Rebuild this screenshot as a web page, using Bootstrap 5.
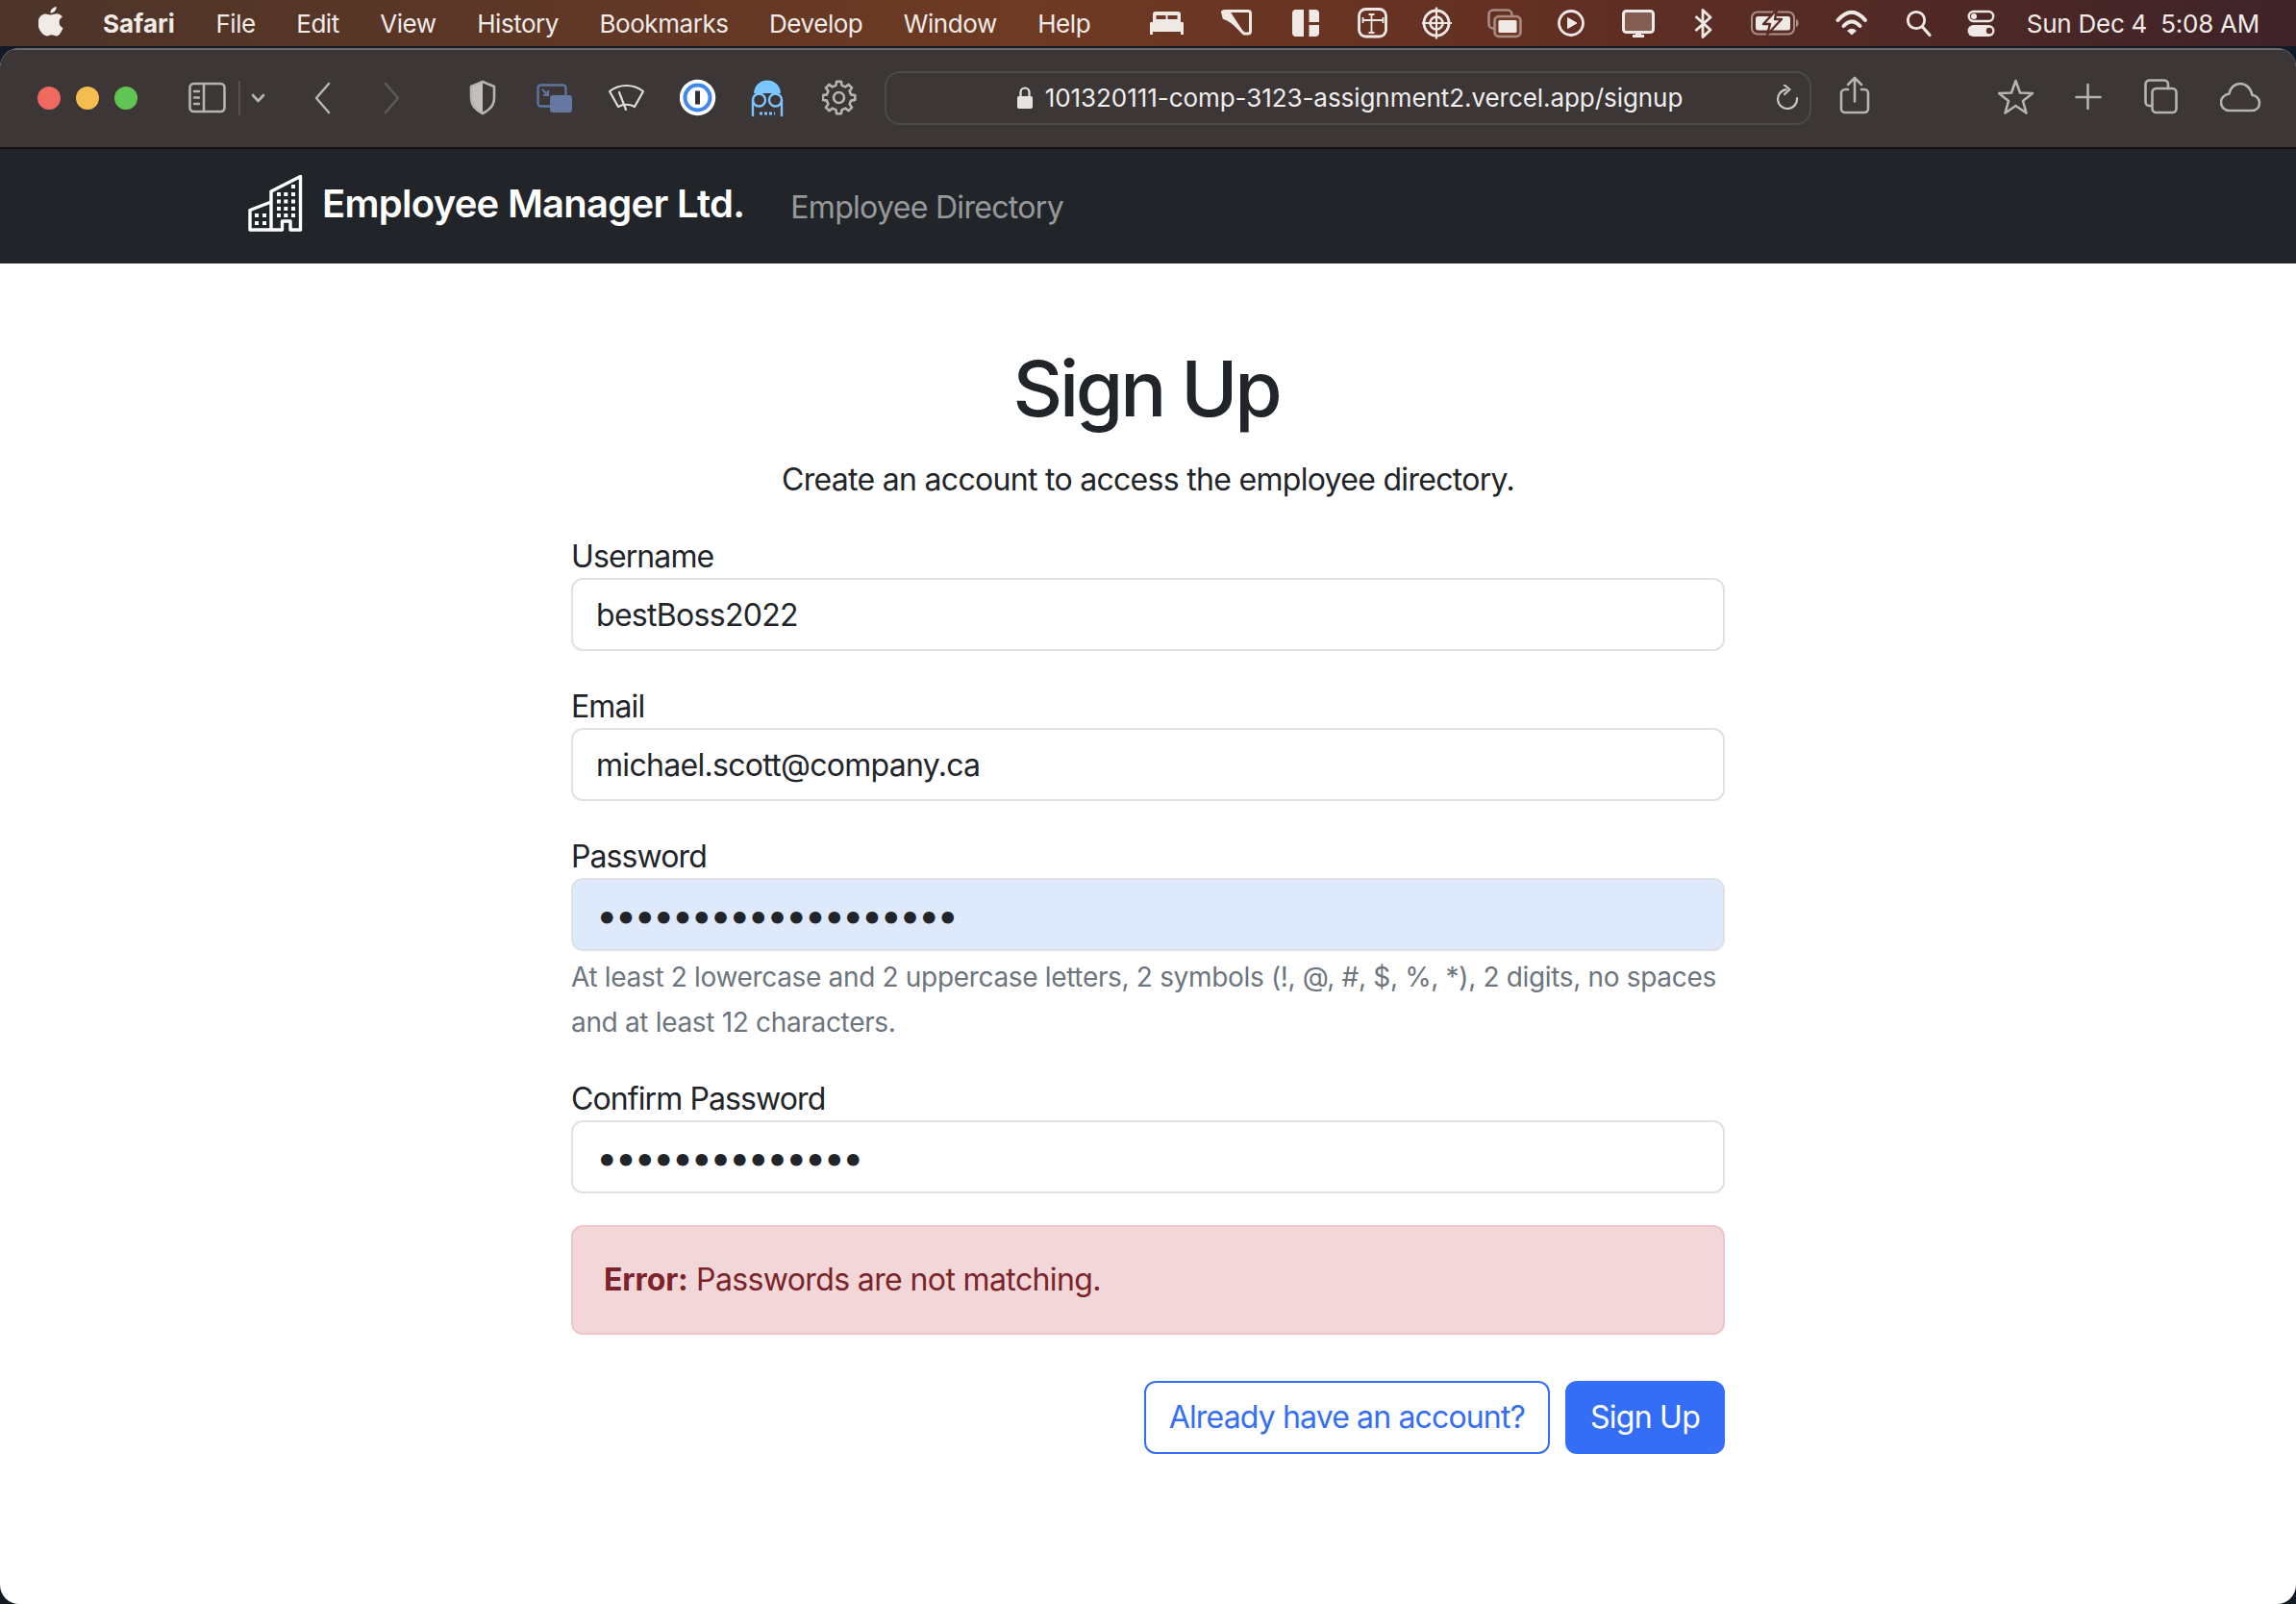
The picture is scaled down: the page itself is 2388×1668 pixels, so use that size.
<!DOCTYPE html>
<html lang="en">
<head>
<meta charset="UTF-8">
<meta name="viewport" content="width=device-width, initial-scale=1.0">
<title>Sign Up</title>
<link href="https://cdn.jsdelivr.net/npm/bootstrap@5.3.0/dist/css/bootstrap.min.css" rel="stylesheet">
<style>
    /* screenshot is a 2x retina capture, so 1rem = 32px */
    html { font-size: 32px; }
    :root { --bs-border-width: 2px; --bs-body-font-family: Inter, "Liberation Sans", sans-serif; --bs-body-color: #212529; }
    body { background: #121a28; height: 1668px; overflow: hidden; font-family: Inter, "Liberation Sans", sans-serif; }
    svg { display: block; flex: none; }

    .menubar { height: 48px; padding: 0 38px 0 40px; color: #f1ebe8; font-size: 26px; letter-spacing: -.45px; background: linear-gradient(90deg, #4c3429 0%, #6f3a23 45%, #622f23 68%, #3e2329 100%); }
    .menubar .menu-app { font-weight: 700; letter-spacing: 0; }
    .menu-items { gap: 42.500px; }
    .menu-clock { white-space: pre; letter-spacing: -.25px; }

    .app-window { height: 1618px; margin-top: 2px; border-radius: 20px; overflow: hidden; background: #fff; }
    .toolbar { height: 105px; padding: 0 0 2px 39px; background: #3c3636; border-top: 2px solid #6d6967; border-bottom: 2px solid #121212; }
    .traffic { gap: 16px; width: 157px; }
    .traffic span { width: 24px; height: 24px; border-radius: 50%; }
    .urlbar { width: 964px; height: 56px; border: 2px solid #4f4a4a; border-radius: 16px; color: #f0eeee; font-size: 26px; letter-spacing: -.06px; gap: 13px; margin-right: 29px; padding-left: 4px; }
    .reload-ico { position: absolute; right: 11px; top: 12px; }
    .tool-line { fill: none; stroke: #b7b3b2; stroke-width: 2.6; stroke-linecap: round; stroke-linejoin: round; }

    .top-nav { background: #212529; height: 119px; }
    .nav-wrap { width: 1920px; padding: 0 24px; margin: 0 auto; }
    .nav-wrap svg { margin-top: -8px; }
    .brand-name { color: #fff; font-size: 40px; font-weight: 600; letter-spacing: -.73px; margin: -6px 48px 0 20px; white-space: nowrap; }
    .nav-text { color: rgba(255,255,255,.55); font-size: 32px; letter-spacing: -.68px; margin-top: 2px; }

    .signup { width: 1200px; margin: 0 auto; padding-top: 82px; letter-spacing: -.7px; }
    .signup h1 { font-size: 80px; font-weight: 500; line-height: 96px; margin-bottom: 23px; letter-spacing: -3.200px; padding-right: 4px; }
    .signup .intro { margin-bottom: 32px; }
    .signup .form-label { display: block; margin-bottom: -2px; line-height: 48px; letter-spacing: -.9px; }
    .signup .form-control { letter-spacing: -.7px; padding-top: 13px; padding-bottom: 11px; }
    .field-gap { margin-bottom: 34px; }
    .signup .pw-dots { font-size: 40px; line-height: 48px; height: 76px; letter-spacing: -2.800px; padding-top: 12px; padding-bottom: 12px; }
    .input-filled, .input-filled:focus { background: #dee9fb; }
    .hint { font-size: 28px; line-height: 47px; color: #6c757d; margin: 4px 0 -2px; letter-spacing: -.33px; }
    .alert-err { --bs-alert-bg: #f3d6d8; --bs-alert-border-color: #eec5c8; --bs-alert-color: #7a2329; margin-top: -1px; margin-bottom: 48px; padding-top: 31px; padding-bottom: 31px; letter-spacing: -.62px; }
    .alert-err strong { letter-spacing: -.1px; }
    .signup .btn { letter-spacing: -.75px; }
    .signup .btn-outline-primary { letter-spacing: -.85px; }
    .btn-primary { --bs-btn-bg: #356ef6; --bs-btn-border-color: #356ef6; }
    .btn-outline-primary { --bs-btn-color: #356ef6; --bs-btn-border-color: #356ef6; }
</style>
</head>
<body>
    <!-- macOS menu bar -->
    <div class="menubar d-flex align-items-center">
        <svg width="67" height="36" viewBox="0 0 67 36"><path fill="#f1ebe8" d="M18 8.200c1.600 0 3.200-1 5.400-1 2.600 0 4.800 1.300 6.100 3.400-2.700 1.700-3.400 3.600-3.400 5.600 0 2.600 1.400 4.600 3.900 5.800-.8 2.500-3.600 8.400-6.700 8.400-1.800 0-2.900-1.200-5-1.200-2.200 0-3.300 1.200-5 1.200C9.300 30.400 4 23.700 4 17.300c0-6 3.700-9.800 7.900-9.800 2.400 0 4.500 1.700 6.100.7zM23.200 0c.2 3.900-3 6.800-6.300 6.600C16.600 3 20 .2 23.200 0z" transform="translate(-4.500 1)"/></svg>
        <div class="menu-items d-flex">
            <span class="menu-app">Safari</span><span>File</span><span>Edit</span><span>View</span><span>History</span><span>Bookmarks</span><span>Develop</span><span>Window</span><span>Help</span>
        </div>
        <div class="d-flex align-items-center ms-auto">
            <svg width="74" height="36" viewBox="0 0 74 36"><path fill="#efe9e6" fill-rule="evenodd" d="M6 6h23a3 3 0 0 1 3 3v8H3V9a3 3 0 0 1 3-3zM6.500 10v4h10v-4zM18.500 10v4h10v-4zM1 17h33a1 1 0 0 1 1 1v12h-3v-3H3v3H0V18a1 1 0 0 1 1-1z"/></svg>
            <svg width="73" height="36" viewBox="0 0 73 36"><path fill="#efe9e6" stroke="#efe9e6" stroke-width="1" d="M1 6h8l15 23C18 24 14 16 3 13z"/><path fill="none" stroke="#efe9e6" stroke-width="3" stroke-linejoin="round" d="M1.500 6.500Q2 5.500 4 5.500h24a2.500 2.500 0 0 1 2.500 2.500v18.500a2.500 2.500 0 0 1-2.500 2.500h-4C18 24 14 16 3 12.500z"/></svg>
            <svg width="69" height="36" viewBox="0 0 69 36"><path fill="#efe9e6" d="M5 4h8v28H5a4 4 0 0 1-4-4V8a4 4 0 0 1 4-4zM18.500 4H25a4 4 0 0 1 4 4v9H18.500zM18.500 20H29v8a4 4 0 0 1-4 4h-6.500z"/></svg>
            <svg width="67" height="36" viewBox="0 0 67 36"><rect x="1.500" y="3.500" width="28" height="28.500" rx="7" fill="none" stroke="#efe9e6" stroke-width="2.800"/><path fill="none" stroke="#efe9e6" stroke-width="1.800" d="M14.500 9v19M11.500 9h6M11.500 28h6M5.500 15h21M5.500 12v6M26.500 12v6"/></svg>
            <svg width="67" height="36" viewBox="0 0 67 36"><g fill="none" stroke="#efe9e6"><circle cx="15" cy="18" r="13" stroke-width="2.800"/><circle cx="15" cy="18" r="6.500" stroke-width="2.600"/><path stroke-width="2.200" d="M15 1.500v33M-1 18h32"/></g></svg>
            <svg width="74" height="36" viewBox="0 0 74 36"><rect x="2.500" y="4.500" width="24" height="19" rx="4.500" fill="none" stroke="#a88b82" stroke-width="2.600"/><rect x="8.500" y="11" width="27" height="21" rx="4.500" fill="#6f3a2a" stroke="#a88b82" stroke-width="2.600"/><rect x="12.500" y="15" width="19" height="13" rx="1.500" fill="#efe9e6"/></svg>
            <svg width="67" height="36" viewBox="0 0 67 36"><circle cx="14" cy="18" r="12.500" fill="none" stroke="#efe9e6" stroke-width="2.800"/><path fill="#efe9e6" stroke="#efe9e6" stroke-linejoin="round" d="M10.500 12.500l9.500 5.500-9.500 5.500z"/></svg>
            <svg width="75" height="36" viewBox="0 0 75 36"><rect x="1.500" y="5.500" width="31" height="22" rx="3" fill="#835d52" stroke="#efe9e6" stroke-width="3"/><path fill="#efe9e6" d="M14 28h6v2h3v3H11v-3h3z"/></svg>
            <svg width="59" height="36" viewBox="0 0 59 36"><path fill="none" stroke="#efe9e6" stroke-width="2.800" stroke-linejoin="round" d="M1.500 11l15.500 14-8 7.500V4.500l8 7.500-15.500 14"/></svg>
            <svg width="87" height="36" viewBox="0 0 87 36"><rect x="1" y="6.500" width="44" height="23" rx="6" fill="none" stroke="#a98f86" stroke-width="2"/><rect x="5" y="11" width="36" height="14.500" rx="2.500" fill="#efe9e6"/><path fill="#a98f86" d="M47 14c1.800.5 2.600 2 2.600 4s-.8 3.500-2.600 4z"/><path fill="#efe9e6" stroke="#5b2c24" stroke-width="2.400" stroke-linejoin="round" d="M27 4L13 19h7l-3 11 15-16h-7z"/></svg>
            <svg width="75" height="36" viewBox="0 0 75 36"><g fill="none" stroke="#efe9e6" stroke-width="4" stroke-linecap="round"><path d="M3.500 15Q18-1.500 32 15"/><path d="M9.500 21Q18 12 26.500 21"/></g><path fill="#efe9e6" d="M13 26Q18 21.500 23 26L18 30.500z"/></svg>
            <svg width="63" height="36" viewBox="0 0 63 36"><circle cx="10" cy="15" r="8.700" fill="none" stroke="#efe9e6" stroke-width="2.800"/><path stroke="#efe9e6" stroke-width="3.200" stroke-linecap="round" d="M16.500 22l7.500 8.500"/></svg>
            <svg width="62" height="36" viewBox="0 0 62 36"><rect x="1.700" y="6" width="25.500" height="10" rx="5" fill="none" stroke="#efe9e6" stroke-width="2.400"/><circle cx="7" cy="11" r="3" fill="#efe9e6"/><rect x=".5" y="20" width="28" height="12" rx="6" fill="#efe9e6"/><circle cx="23" cy="26" r="3.200" fill="#5b2c28"/></svg>
            <span class="menu-clock">Sun Dec 4  5:08 AM</span>
        </div>
    </div>

    <div class="app-window d-flex flex-column">
        <!-- browser chrome -->
        <div class="toolbar d-flex align-items-center">
            <div class="traffic d-flex">
                <span style="background:#ee6a5f"></span><span style="background:#f5bd4f"></span><span style="background:#61c554"></span>
            </div>
            <svg width="65" height="56" viewBox="0 0 65 56"><g class="tool-line"><rect x="1.500" y="13" width="36" height="29" rx="4"/><path d="M16 13v29M6 21h5M6 27.500h5M6 34h5"/></g><path stroke="#565150" stroke-width="2" d="M53 10v36"/></svg>
            <svg width="66" height="56" viewBox="0 0 66 56"><path class="tool-line" stroke-width="3" d="M2 25l5.500 6 5.500-6"/></svg>
            <svg width="72" height="56" viewBox="0 0 72 56"><path class="tool-line" d="M15 13L2 28l13 15"/></svg>
            <svg width="89" height="56" viewBox="0 0 89 56"><path fill="none" stroke="#5f5a59" stroke-width="2.600" stroke-linecap="round" stroke-linejoin="round" d="M2 13l13 15L2 43"/></svg>
            <svg width="70" height="56" viewBox="0 0 70 56"><path fill="#c3bebd" d="M14 11v33C8 41 2 36 2 28V16z"/><path class="tool-line" d="M14 11l12 5v12c0 8-6 13-12 16C8 41 2 36 2 28V16z"/></svg>
            <svg width="75" height="56" viewBox="0 0 75 56"><rect x="1.500" y="14.500" width="29" height="22" rx="3" fill="none" stroke="#5f759f" stroke-width="2.400"/><rect x="14" y="25" width="23" height="18" rx="3" fill="#66789f"/><path fill="none" stroke="#5f759f" stroke-width="2.200" d="M6 19l6 6M12 20v5H7"/></svg>
            <svg width="74" height="56" viewBox="0 0 74 56"><g fill="none" stroke="#e0dcdb" stroke-width="2.200" stroke-linejoin="round" stroke-linecap="round"><path d="M1 21C11 13 26 13 36 21L27 37c-5-3-12-3-17 0z"/><path d="M11 22l7 18"/></g></svg>
            <svg width="73" height="56" viewBox="0 0 73 56"><circle cx="18.500" cy="27.500" r="18.700" fill="#fff"/><circle cx="18.500" cy="27.500" r="15" fill="#3d87ef"/><circle cx="18.500" cy="27.500" r="11" fill="#fff"/><rect x="16" y="20.500" width="5" height="14" fill="#2f2f35"/></svg>
            <svg width="75" height="56" viewBox="0 0 75 56"><path fill="#7cc6ff" d="M4 23C5 5 31 5 32 23z"/><g fill="none" stroke="#7cc6ff" stroke-width="2.400"><circle cx="9.500" cy="30" r="6.500"/><circle cx="26.500" cy="30" r="6.500"/><path d="M3 30v17M33 30v17"/><path stroke-width="3" stroke-dasharray="3 2" d="M10 44h16"/></g></svg>
            <svg width="65" height="56" viewBox="0 0 65 56"><g transform="translate(17.500 27.500)" class="tool-line" stroke-width="2.300"><polygon points="16.800,2.400 12.600,3.100 11.100,6.700 13.600,10.200 10.200,13.600 6.700,11.100 3.100,12.600 2.400,16.800 -2.400,16.800 -3.100,12.600 -6.700,11.100 -10.200,13.600 -13.600,10.200 -11.100,6.700 -12.600,3.100 -16.800,2.400 -16.800,-2.400 -12.600,-3.100 -11.100,-6.700 -13.600,-10.200 -10.200,-13.600 -6.700,-11.100 -3.100,-12.600 -2.400,-16.800 2.400,-16.800 3.100,-12.600 6.700,-11.100 10.200,-13.600 13.600,-10.200 11.100,-6.700 12.600,-3.100 16.800,-2.400"/><circle r="5.500"/></g></svg>
            <div class="urlbar position-relative d-flex align-items-center justify-content-center">
                <svg width="16" height="23" viewBox="0 0 16 23"><path fill="#e6e3e3" d="M2 10h12a2 2 0 0 1 2 2v9a2 2 0 0 1-2 2H2a2 2 0 0 1-2-2v-9a2 2 0 0 1 2-2z"/><path fill="none" stroke="#e6e3e3" stroke-width="2.200" d="M3.500 11V6a4.500 4.500 0 0 1 9 0v5"/></svg>
                <span>101320111-comp-3123-assignment2.vercel.app/signup</span>
                <svg class="reload-ico" width="25" height="28" viewBox="0 0 25 28"><path fill="none" stroke="#c9c6c5" stroke-width="2.200" stroke-linecap="round" stroke-linejoin="round" d="M11.500 5.100A10 10 0 1 0 23 14M10 .5L15.500 5 10 10"/></svg>
            </div>
            <svg width="165" height="56" viewBox="0 0 165 56"><g class="tool-line" stroke-width="2.800"><path d="M9 19H6a4 4 0 0 0-4 4v16a4 4 0 0 0 4 4h20a4 4 0 0 0 4-4V23a4 4 0 0 0-4-4h-3"/><path d="M16 7.500v24M9 14l7-7 7 7"/></g></svg>
            <svg width="80" height="56" viewBox="0 0 80 56"><polygon class="tool-line" points="18.500,10 23,22.500 36,23 26,31 29.500,43.500 18.500,36 7.500,43.500 11,31 1,23 14,22.500"/></svg>
            <svg width="72" height="56" viewBox="0 0 72 56"><path class="tool-line" d="M13.500 14v25M1.500 27h25"/></svg>
            <svg width="79" height="56" viewBox="0 0 79 56"><g class="tool-line"><path d="M8 36H5.500a4 4 0 0 1-4-4V13.500a4 4 0 0 1 4-4H21a4 4 0 0 1 4 4V18"/><rect x="8.500" y="18" width="25" height="25" rx="4"/></g></svg>
            <svg width="50" height="56" viewBox="0 0 50 56"><path class="tool-line" d="M9.500 41H33c5 0 8-3.500 8-8 0-4.500-3.500-8-7.500-8C32 17.500 27 13 21 13c-6 0-10.500 4.500-11.500 10.500C4.500 24.500 1 28 1 32.500 1 37.500 5 41 9.500 41z"/></svg>
        </div>

        <!-- site navbar -->
        <nav class="top-nav d-flex align-items-center">
            <div class="nav-wrap d-flex align-items-center">
                <svg width="57" height="60" viewBox="0 0 57 60"><path fill="none" stroke="#fff" stroke-width="3.400" stroke-linejoin="round" d="M2 58V37.500L24 29V18L54.500 2.500V58H44V49H35.500V58zM24 29V58"/><g fill="#fff"><rect x="45" y="11" width="4" height="4"/><rect x="30" y="19" width="4" height="4"/><rect x="37.300" y="19" width="4" height="4"/><rect x="45" y="19" width="4" height="4"/><rect x="30" y="26.500" width="4" height="4"/><rect x="37.300" y="26.500" width="4" height="4"/><rect x="45" y="26.500" width="4" height="4"/><rect x="30" y="34" width="4" height="4"/><rect x="37.300" y="34" width="4" height="4"/><rect x="45" y="34" width="4" height="4"/><rect x="30" y="41" width="4" height="4"/><rect x="37.300" y="41" width="4" height="4"/><rect x="45" y="41" width="4" height="4"/><rect x="7" y="41" width="4" height="4"/><rect x="15" y="41" width="4" height="4"/><rect x="7" y="49" width="4" height="4"/><rect x="15" y="49" width="4" height="4"/></g></svg>
                <span class="brand-name">Employee Manager Ltd.</span>
                <span class="nav-text">Employee Directory</span>
            </div>
        </nav>

        <!-- sign up form -->
        <main class="signup">
            <h1 class="text-center">Sign Up</h1>
            <p class="intro text-center">Create an account to access the employee directory.</p>
            <form>
                <div class="field-gap">
                    <label class="form-label" for="username">Username</label>
                    <input class="form-control" id="username" type="text" value="bestBoss2022">
                </div>
                <div class="field-gap">
                    <label class="form-label" for="email">Email</label>
                    <input class="form-control" id="email" type="email" value="michael.scott@company.ca">
                </div>
                <div class="field-gap">
                    <label class="form-label" for="password">Password</label>
                    <input class="form-control pw-dots input-filled" id="password" type="password" value="passwordpassword123">
                    <div class="hint">At least 2 lowercase and 2 uppercase letters, 2 symbols (!, @, #, $, %, *), 2 digits, no spaces and at least 12 characters.</div>
                </div>
                <div class="field-gap">
                    <label class="form-label" for="confirm">Confirm Password</label>
                    <input class="form-control pw-dots" id="confirm" type="password" value="passwordpasswo">
                </div>
                <div class="alert alert-danger alert-err"><strong>Error:</strong> Passwords are not matching.</div>
                <div class="d-flex justify-content-end gap-2">
                    <a class="btn btn-outline-primary" href="#">Already have an account?</a>
                    <button class="btn btn-primary" type="button">Sign Up</button>
                </div>
            </form>
        </main>
    </div>
<script src="https://cdn.jsdelivr.net/npm/bootstrap@5.3.0/dist/js/bootstrap.bundle.min.js"></script>
</body>
</html>
